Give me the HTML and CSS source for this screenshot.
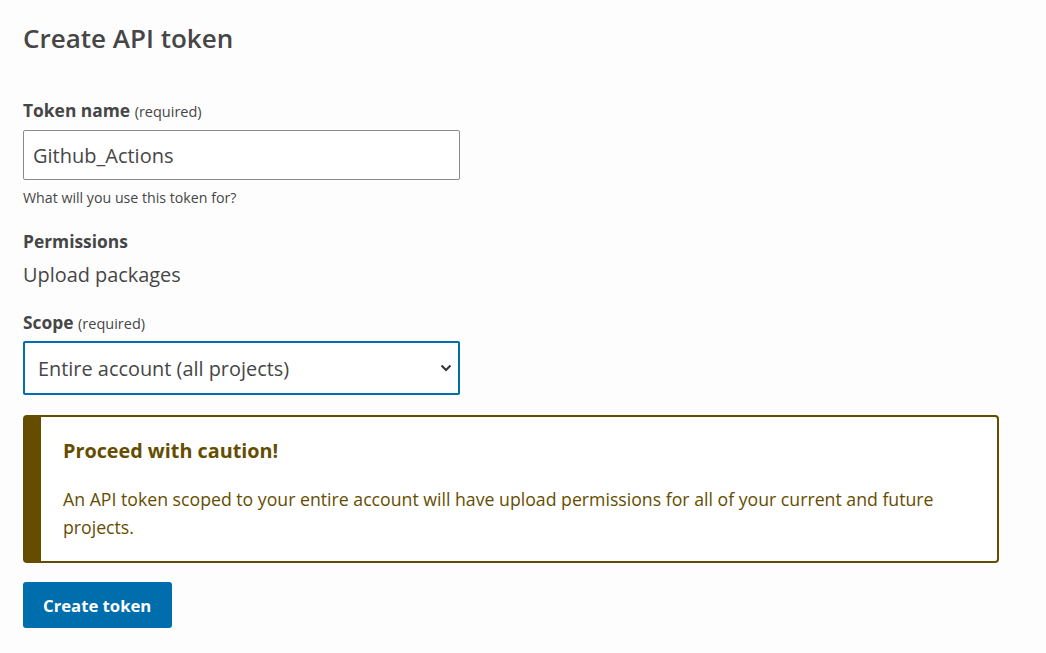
FILE: index.html
```html
<!DOCTYPE html>
<html>
<head>
<meta charset="utf-8">
<link rel="stylesheet" href="styles.css">
</head>
<body>
<main class="page">
  <h1 class="title">Create API token</h1>
  <form class="form">
    <div class="field">
      <label class="label">Token name <span class="req">(required)</span></label>
      <input class="input" type="text" value="Github_Actions">
      <p class="help">What will you use this token for?</p>
    </div>
    <div class="field">
      <div class="label">Permissions</div>
      <div class="value">Upload packages</div>
    </div>
    <div class="field">
      <label class="label">Scope <span class="req">(required)</span></label>
      <div class="select">
        <span class="select-text">Entire account (all projects)</span>
        <svg class="chev" width="12" height="8" viewBox="0 0 12 8"><path d="M1.5 1.5 L6 6 L10.5 1.5" fill="none" stroke="#333" stroke-width="2"/></svg>
      </div>
    </div>
    <div class="callout">
      <h3 class="callout-title">Proceed with caution!</h3>
      <p class="callout-body">An API token scoped to your entire account will have upload permissions for all of your current and future projects.</p>
    </div>
    <button class="btn" type="button">Create token</button>
  </form>
</main>
</body>
</html>
```
FILE: styles.css
```css
html, body { margin: 0; padding: 0; background: #fdfdfd; }
body { font-family: "Open Sans", "Noto Sans", sans-serif; color: #464646; }
.page { padding: 0 0 0 23px; width: 976px; }
.title { margin: 0; padding-top: 20px; font-size: 26px; font-weight: 600; line-height: 36px; color: #464646; }
.form { margin-top: 42px; display: flex; flex-direction: column; }
.field { display: flex; flex-direction: column; }
.label { font-size: 17.4px; font-weight: 700; line-height: 24px; color: #464646; }
.req { font-size: 14.5px; font-weight: 400; }
.input { box-sizing: border-box; margin-top: 6px; width: 437px; height: 50px; border: 1px solid #8a8a8a; border-radius: 2px; background: #fff; padding: 0 9px; font-family: inherit; font-size: 20px; color: #464646; }
.help { margin: 8px 0 0; font-size: 14.2px; line-height: 20px; }
.field + .field { margin-top: 21px; }
.value { margin-top: 8px; font-size: 19.9px; line-height: 28px; }
.select { box-sizing: border-box; margin-top: 5px; width: 437px; height: 54px; border: 2px solid #006dad; border-radius: 2px; background: #fff; display: flex; align-items: center; justify-content: space-between; padding: 0 6px 0 13px; font-size: 19.9px; }
.callout { box-sizing: border-box; margin-top: 20px; width: 976px; border: 2px solid #654d00; border-left: 18px solid #654d00; border-radius: 4px; background: #fff; padding: 20px 40px 20px 22px; color: #654d00; }
.callout-title { margin: 0; font-size: 19.8px; font-weight: 700; line-height: 28px; }
.callout-body { margin: 20px 0 0; font-size: 17.7px; line-height: 28px; }
.btn { align-self: flex-start; margin-top: 19px; height: 46px; padding: 0 21px 0 20px; background: #006dad; color: #fff; border: 0; border-radius: 3px; font-family: inherit; font-size: 16.7px; font-weight: 700; }
```
